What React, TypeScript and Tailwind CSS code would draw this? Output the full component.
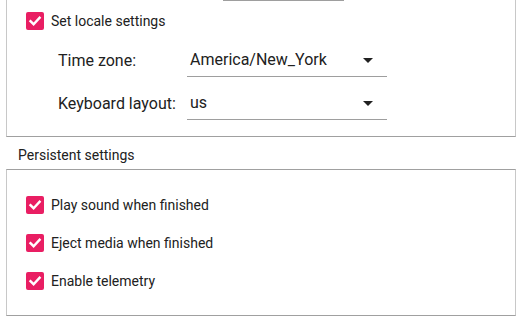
function CheckBox() {
  return (
    <span className="flex h-[18px] w-[18px] shrink-0 items-center justify-center rounded-[2px] bg-[#e91e63]">
      <svg width="14" height="14" viewBox="0 0 14 14" fill="none">
        <path d="M2.5 7.2 L5.6 10.2 L11.6 3.8" stroke="white" strokeWidth="2.4" strokeLinecap="square" />
      </svg>
    </span>
  );
}

function CheckRow({ label }: { label: string }) {
  return (
    <div className="flex h-[18px] items-center gap-[7px]">
      <CheckBox />
      <span className="text-[14px] text-[#212121]">{label}</span>
    </div>
  );
}

function Combo({ value }: { value: string }) {
  return (
    <div className="flex h-[33px] w-[200px] items-center justify-between border-b border-[#9e9e9e] pl-[3px] pr-[14px]">
      <span className="text-[16px] text-[#212121]">{value}</span>
      <svg width="10" height="5" viewBox="0 0 10 5">
        <path d="M0 0 L10 0 L5 5 Z" fill="#212121" />
      </svg>
    </div>
  );
}

export default function App() {
  return (
    <div className="h-[321px] w-[522px] overflow-hidden bg-white font-['Roboto',sans-serif]">
      {/* locale frame, top edge scrolled out of view */}
      <div className="mx-[6px] -mt-[21px] border border-[#a0a0a0] border-x-[#c8c8c8] pb-[16px]">
        <div className="h-[21px]">
          <div className="ml-[216px] h-[21px] w-[121px] border-b border-[#9e9e9e]"></div>
        </div>
        <div className="mt-[11px] pl-[19px]">
          <CheckRow label="Set locale settings" />
        </div>
        <div className="mt-[14px] flex flex-col gap-[10px] pl-[51px]">
          <div className="flex items-center">
            <span className="w-[129px] text-[16px] text-[#212121]">Time zone:</span>
            <Combo value="America/New_York" />
          </div>
          <div className="flex items-center">
            <span className="w-[129px] text-[16px] text-[#212121]">Keyboard layout:</span>
            <Combo value="us" />
          </div>
        </div>
      </div>

      <div className="mt-[8px] h-[20px] pl-[18px] text-[14px] leading-[20px] text-[#212121]">Persistent settings</div>

      <div className="mx-[6px] mt-[4px] flex flex-col gap-[20px] border border-[#a0a0a0] border-x-[#c8c8c8] pt-[26px] pb-[25px] pl-[19px]">
        <CheckRow label="Play sound when finished" />
        <CheckRow label="Eject media when finished" />
        <CheckRow label="Enable telemetry" />
      </div>
    </div>
  );
}
